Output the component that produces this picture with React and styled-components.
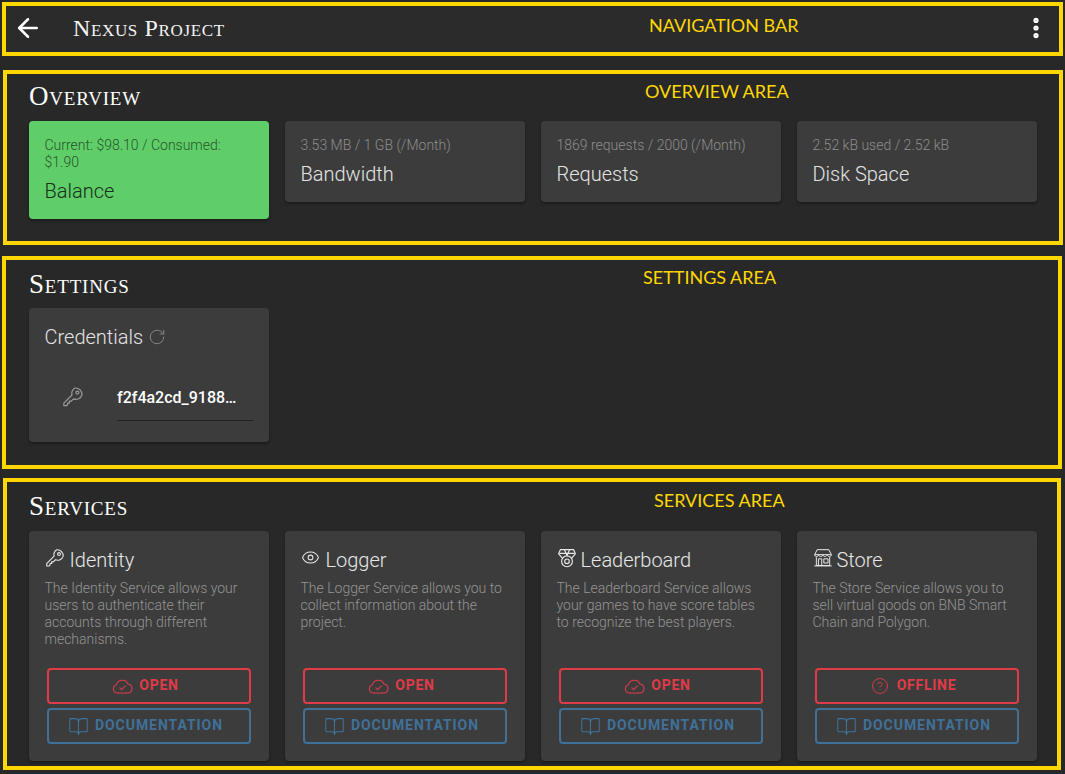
import React from "react";
import styled, { createGlobalStyle } from "styled-components";
import { ArrowLeft, EllipsisVertical, RotateCw, Eye, BookOpen, CircleHelp } from "lucide-react";

const GlobalStyle = createGlobalStyle`
  html, body { margin: 0; padding: 0; background: #282828; }
  body { font-family: Roboto, "Liberation Sans", sans-serif; color: #fff; }
  * { box-sizing: border-box; }
`;

const KeyIcon = ({ size = 24 }) => (
  <svg width={size} height={size} viewBox="0 0 24 24" fill="none" stroke="currentColor" strokeWidth="1.3" strokeLinejoin="round">
    <path d="M14.2 2.2a7 7 0 0 1 7.600 7.600 7 7 0 0 1-9.300 4.300L10 16.600H8v2H6v2l-1 .9H2v-2.800l8.900-8.900a7 7 0 0 1 3.300-7.600z" />
    <circle cx="16.800" cy="7.200" r="1.700" />
  </svg>
);

const MedalIcon = ({ size = 20 }) => (
  <svg width={size} height={size} viewBox="0 0 24 24" fill="none" stroke="currentColor" strokeWidth="1.400" strokeLinejoin="round">
    <path d="M4 2h16l2 5-6 7H8L2 7z" />
    <path d="M3 6.500h18M9 2l3 7 3-7" />
    <circle cx="12" cy="16" r="6.500" fill="#3c3c3c" />
    <circle cx="12" cy="16" r="2.800" />
  </svg>
);

const StoreIcon = ({ size = 20 }) => (
  <svg width={size} height={size} viewBox="0 0 24 24" fill="none" stroke="currentColor" strokeWidth="1.200" strokeLinejoin="round">
    <path d="M5 2h14l3 6H2z" />
    <path d="M2 8c0 3 4 3 5 0 0 3 4 3 5 0 0 3 4 3 5 0 1 3 5 3 5 0" />
    <path d="M4 11v10h16V11" />
    <path d="M6.500 13h4v8h-4zM13 13h5v5h-5zM1.500 21.500h21" />
  </svg>
);

const CloudIcon = ({ size = 21 }) => (
  <svg width={size} height={size} viewBox="0 0 24 24" fill="none" stroke="currentColor" strokeWidth="1.200" strokeLinecap="round" strokeLinejoin="round">
    <path d="M6.200 19.500a4.700 4.700 0 0 1-1.200-9.200 7 7 0 0 1 13.300-1.200 5.300 5.300 0 0 1 .5 10.400z" />
    <path d="M9 13.500l2.200 2.200 4-4.400" />
  </svg>
);

const overview = [
  { sub: "Current: $98.10 / Consumed: $1.90", title: "Balance", good: true },
  { sub: "3.53 MB / 1 GB (/Month)", title: "Bandwidth" },
  { sub: "1869 requests / 2000 (/Month)", title: "Requests" },
  { sub: "2.52 kB used / 2.52 kB", title: "Disk Space" },
];

const services = [
  { icon: <KeyIcon size={20} />, iconWidth: 25, title: "Identity", text: "The Identity Service allows your users to authenticate their accounts through different mechanisms." },
  { icon: <Eye size={19} strokeWidth={1.3} />, iconWidth: 25, title: "Logger", text: "The Logger Service allows you to collect information about the project." },
  { icon: <MedalIcon />, iconWidth: 24, title: "Leaderboard", text: "The Leaderboard Service allows your games to have score tables to recognize the best players." },
  { icon: <StoreIcon />, iconWidth: 24, title: "Store", text: "The Store Service allows you to sell virtual goods on BNB Smart Chain and Polygon.", offline: true },
];

export default function App() {
  return (
    <>
      <GlobalStyle />
      <Page>
        <NavBar>
          <BackButton><ArrowLeft size={30} strokeWidth={2} /></BackButton>
          <NavTitle>Nexus Project</NavTitle>
          <NavLabel>NAVIGATION BAR</NavLabel>
          <MoreButton><EllipsisVertical size={26} strokeWidth={2.8} /></MoreButton>
        </NavBar>

        <Area $height={175} $top={14} $left={3} $right={2} $pad={7}>
          <AreaLabel $left={638} $top={6}>OVERVIEW AREA</AreaLabel>
          <Heading $gap={9}>Overview</Heading>
          <CardGrid>
            {overview.map((o) => (
              <StatCard key={o.title} $good={o.good}>
                <StatSub $good={o.good}>{o.sub}</StatSub>
                <StatTitle $good={o.good}>{o.title}</StatTitle>
              </StatCard>
            ))}
          </CardGrid>
        </Area>

        <Area $height={213} $top={11} $left={2} $right={3} $pad={9}>
          <AreaLabel $left={637} $top={6}>SETTINGS AREA</AreaLabel>
          <Heading $gap={8}>Settings</Heading>
          <CardGrid>
            <CredCard>
              <CredTitle>
                Credentials
                <RotateCw size={18} strokeWidth={1.2} color="#8d8d8d" />
              </CredTitle>
              <CredRow>
                <CredIcon><KeyIcon size={22} /></CredIcon>
                <CredValue>f2f4a2cd_9188…</CredValue>
              </CredRow>
            </CredCard>
          </CardGrid>
        </Area>

        <Area $height={292} $top={9} $left={3} $right={4} $pad={9}>
          <AreaLabel $left={647} $top={7}>SERVICES AREA</AreaLabel>
          <Heading $gap={9}>Services</Heading>
          <CardGrid>
            {services.map((s) => (
              <ServiceCard key={s.title}>
                <ServiceTitle>
                  <ServiceIcon $width={s.iconWidth}>{s.icon}</ServiceIcon>
                  {s.title}
                </ServiceTitle>
                <ServiceText>{s.text}</ServiceText>
                <ActionButton $color="#e03b47" $spacing={0.75} $gap={s.offline ? 8 : 6}>
                  {s.offline ? <CircleHelp size={18} strokeWidth={1.2} /> : <CloudIcon />}
                  {s.offline ? "OFFLINE" : "OPEN"}
                </ActionButton>
                <ActionButton $color="#3f7199" $spacing={0.95} $gap={6}>
                  <BookOpen size={21} strokeWidth={1.2} />
                  DOCUMENTATION
                </ActionButton>
              </ServiceCard>
            ))}
          </CardGrid>
        </Area>
      </Page>
    </>
  );
}

const Page = styled.div`
  width: 1065px;
  height: 774px;
  overflow: hidden;
  padding-top: 2px;
  background: #282828;
`;
const NavBar = styled.div`
  position: relative;
  height: 54px;
  margin: 0 2px;
  border: 4px solid #ffd700;
  background: #2b2b2b;
  display: flex;
  align-items: center;
  padding: 0 10px 0 7px;
`;
const BackButton = styled.div`
  display: flex;
  margin: -2px 30px 0 0;
  color: #fff;
`;
const NavTitle = styled.div`
  font-family: "Liberation Serif", serif;
  font-variant: small-caps;
  font-size: 24px;
  letter-spacing: 0.65px;
  color: #f4f4f4;
  margin-top: -2px;
`;
const NavLabel = styled.div`
  position: absolute;
  left: 643px;
  top: 8px;
  font-family: Lato, "Open Sans", sans-serif;
  font-size: 18px;
  color: #ffd700;
`;
const MoreButton = styled.div`
  display: flex;
  margin: -3px 0 0 auto;
  color: #fff;
`;
const Area = styled.section`
  position: relative;
  height: ${(p) => p.$height}px;
  margin: ${(p) => p.$top}px ${(p) => p.$right}px 0 ${(p) => p.$left}px;
  border: 4px solid #ffd700;
  background: #282828;
  padding: ${(p) => p.$pad}px 0 0 ${(p) => 29 - p.$left - 4}px;
`;
const AreaLabel = styled.div`
  position: absolute;
  left: ${(p) => p.$left}px;
  top: ${(p) => p.$top}px;
  font-family: Lato, "Open Sans", sans-serif;
  font-size: 18px;
  color: #ffd700;
`;
const Heading = styled.h2`
  margin: 0 0 ${(p) => p.$gap}px;
  height: 31px;
  line-height: 31px;
  font-family: "Liberation Serif", serif;
  font-variant: small-caps;
  font-weight: 400;
  font-size: 27px;
  letter-spacing: 0.8px;
  color: #fff;
`;
const CardGrid = styled.div`
  display: grid;
  grid-template-columns: repeat(4, 240px);
  column-gap: 16px;
  align-items: start;
`;
const Card = styled.div`
  border-radius: 4px;
  background: #3c3c3c;
  box-shadow: 0 2px 3px rgba(0, 0, 0, 0.3);
`;
const StatCard = styled(Card)`
  background: ${(p) => (p.$good ? "#5fce69" : "#3c3c3c")};
  padding: 16px 16px 16px 15.500px;
`;
const StatSub = styled.div`
  font-size: 14px;
  font-weight: 300;
  line-height: 17px;
  color: ${(p) => (p.$good ? "#28552c" : "#8d8d8d")};
`;
const StatTitle = styled.div`
  font-size: 20px;
  font-weight: 300;
  line-height: 24px;
  margin-top: 8px;
  color: ${(p) => (p.$good ? "#17301a" : "#e4e4e4")};
`;
const CredCard = styled(Card)`
  height: 134px;
  padding: 16px 16px 16px 15.500px;
`;
const CredTitle = styled.div`
  display: flex;
  align-items: center;
  gap: 5px;
  font-size: 20px;
  font-weight: 300;
  line-height: 26px;
  color: #e4e4e4;
`;
const CredRow = styled.div`
  display: flex;
  margin-top: 36px;
`;
const CredIcon = styled.div`
  width: 72.500px;
  padding-left: 17px;
  display: flex;
  align-items: flex-start;
  color: #9a9a9a;
`;
const CredValue = styled.div`
  flex: 1;
  height: 35px;
  border-bottom: 1px solid #222;
  font-size: 16px;
  font-weight: 500;
  line-height: 24px;
  color: #fff;
`;
const ServiceCard = styled(Card)`
  height: 230px;
  padding: 16px 16px 0 15.500px;
`;
const ServiceTitle = styled.div`
  display: flex;
  align-items: flex-start;
  font-size: 20px;
  font-weight: 300;
  line-height: 26px;
  color: #e8e8e8;
`;
const ServiceIcon = styled.span`
  display: flex;
  width: ${(p) => p.$width}px;
  padding-top: 1px;
  color: #e8e8e8;
`;
const ServiceText = styled.div`
  height: 88px;
  margin: 7px 0 0;
  font-size: 14px;
  font-weight: 300;
  line-height: 17px;
  color: #949494;
`;
const ActionButton = styled.div`
  display: flex;
  align-items: center;
  justify-content: center;
  gap: ${(p) => p.$gap}px;
  width: 204px;
  height: 36px;
  margin: 0 0 4px 2px;
  padding: 0 6px 2px 0;
  border: 2px solid ${(p) => p.$color};
  border-radius: 4px;
  color: ${(p) => p.$color};
  font-size: 14px;
  font-weight: 700;
  letter-spacing: ${(p) => p.$spacing}px;
  svg {
    margin-top: 2px;
  }
`;
